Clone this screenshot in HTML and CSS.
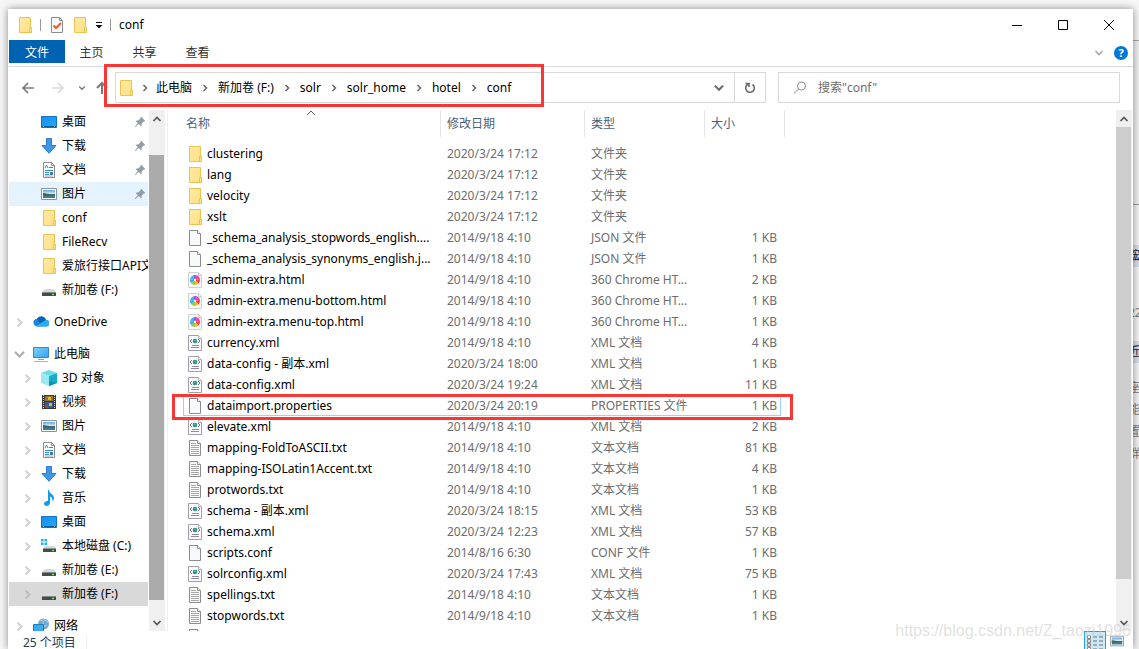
FILE: index.html
```html
<!DOCTYPE html>
<html lang="zh-CN">
<head>
<meta charset="utf-8">
<title>conf</title>
<link rel="stylesheet" href="styles.css">
</head>
<body>
<svg class="defs" aria-hidden="true">
  <defs>
    <linearGradient id="gf" x1="0" y1="0" x2="1" y2="1"><stop offset="0" stop-color="#ffe9a2"/><stop offset="1" stop-color="#ffe084"/></linearGradient>
    <linearGradient id="gd" x1="0" y1="0" x2="1" y2="1"><stop offset="0" stop-color="#1490ee"/><stop offset="1" stop-color="#25a9ff"/></linearGradient>
    <linearGradient id="gm" x1="0" y1="0" x2="1" y2="1"><stop offset="0" stop-color="#7fd0fb"/><stop offset="1" stop-color="#2fa5ee"/></linearGradient>
    <linearGradient id="gp" x1="0" y1="0" x2="0" y2="1"><stop offset="0" stop-color="#5f9fe8"/><stop offset=".45" stop-color="#d8ecf6"/><stop offset=".6" stop-color="#4d7a74"/><stop offset="1" stop-color="#3d78b0"/></linearGradient>
  </defs>
  <symbol id="folder" viewBox="0 0 16 16"><path d="M2.500.5h11v10h1v5h-12z" fill="url(#gf)" stroke="#e9c452"/><path d="M12.500 15.500v-5h2v5z" fill="#ffe391" stroke="#e9c452"/></symbol>
  <symbol id="file" viewBox="0 0 16 16"><path d="M2.500.5h8l3 3v12h-11z" fill="#f8f9fa" stroke="#8c8c8c"/><path d="M10.500.5v3h3" fill="#fff" stroke="#8c8c8c"/></symbol>
  <symbol id="text" viewBox="0 0 16 16"><path d="M2.500.5h8l3 3v12h-11z" fill="#fafafa" stroke="#8c8c8c"/><path d="M10.500.5v3h3" fill="#fff" stroke="#8c8c8c"/><path d="M4 3.500h5M4 5.500h8M4 7.500h8M4 9.500h8M4 11.500h8M4 13.500h8" stroke="#a8a8a8"/></symbol>
  <symbol id="xml" viewBox="0 0 16 16"><path d="M1.500.5h10l3 3v12h-13z" fill="#fbfafc" stroke="#a39fa8"/><path d="M11.500.5v3h3" fill="#fff" stroke="#b5b1b9"/><path d="M5 4L3 6l2 2m6-4l2 2-2 2" fill="none" stroke="#77727e"/><circle cx="8" cy="6" r="2.300" fill="#299481"/><path d="M7 5l2 1" stroke="#5fb7e0"/><path d="M5 10.500h7M4 12.500h8" stroke="#928aa6"/></symbol>
  <symbol id="html" viewBox="0 0 16 16"><path d="M1.500.5h10l3 3v12h-13z" fill="#f8f8f8" stroke="#d2d2d2"/><path d="M11.500.5v3h3" fill="none" stroke="#c8c8c8"/><path d="M8 8L3 7.500A5 5 0 0 1 6 3.500z" fill="#35b6ef"/><path d="M8 8L6 3.500a5 5 0 0 1 4-.2z" fill="#9b4df0"/><path d="M8 8l2-4.700a5 5 0 0 1 3 3.700z" fill="#f04497"/><path d="M8 8l5-1a5 5 0 0 1-1.500 4.500z" fill="#ff3e31"/><path d="M8 8l3.500 3.500A5 5 0 0 1 8 13z" fill="#ffb62b"/><path d="M8 8v5a5 5 0 0 1-4-2z" fill="#8fd13d"/><path d="M8 8l-4 3a5 5 0 0 1-1-3.500z" fill="#35a5ec"/><circle cx="8" cy="8" r="1" fill="#fff"/></symbol>
  <symbol id="desktop" viewBox="0 0 16 16"><path d="M.5 2.500h15v11H.5z" fill="url(#gd)" stroke="#0b74c4"/><path d="M1 12.500h14" stroke="#075da2"/><path d="M2 12.500h1m10 0h1" stroke="#fff"/></symbol>
  <symbol id="download" viewBox="0 0 16 16"><path d="M5.500.5h5v7h4.500L8 15.300 1 7.500h4.500z" fill="#3c97e6" stroke="#2b7cc9"/></symbol>
  <symbol id="document" viewBox="0 0 16 16"><path d="M2.500.5h8l3 3v12h-11z" fill="#fff" stroke="#8c8c8c"/><path d="M10.500.5v3h3" fill="none" stroke="#8c8c8c"/><path d="M4 6l1.500-3L7 6M4 8.500h8M4 10.500h4M4 12.500h4M8 5.500h4" fill="none" stroke="#2f8cc9"/><path d="M9 10h3v3H9z" fill="#4d799f"/><path d="M4 14h8" stroke="#a6a6a6"/></symbol>
  <symbol id="picture" viewBox="0 0 16 16"><path d="M.5 2.500h15v11H.5z" fill="#fff" stroke="#8e9294"/><path d="M2 4h12v8H2z" fill="url(#gp)"/><path d="M2 7c4 0 6 2 12 1v1.500H2z" fill="#32694f"/></symbol>
  <symbol id="drive" viewBox="0 0 16 16"><path d="M4 7h8.500L15 10.500H1z" fill="#d7d9da"/><path d="M1 10h14v4H1z" fill="#484b4d"/><path d="M1 10h14v1H1z" fill="#85898b"/><path d="M11 12.500h2" stroke="#54ec54" stroke-width="1.500"/></symbol>
  <symbol id="system" viewBox="0 0 16 16"><path d="M0 1h2.600v2.600H0zm3.500 0h2.600v2.600H3.500zM0 4.400h2.600V7H0zm3.500 0h2.600V7H3.500z" fill="#14b8f4"/><path d="M4 8h9l2 3H2z" fill="#d7d9da"/><path d="M2 10.500h13V14H2z" fill="#484b4d"/><path d="M11 12.500h2" stroke="#54ec54" stroke-width="1.500"/></symbol>
  <symbol id="cloud" viewBox="0 0 16 16"><path d="M4 12.500a4 4 0 0 1-3-6 4 4 0 0 1 3-1.700 5 5 0 0 1 9 1.400 3.200 3.200 0 0 1 .5 6.300z" fill="#1687dc"/><path d="M4 4.800a5 5 0 0 1 9 1.400L7 9z" fill="#0b62b9"/><path d="M3 12l8-4.500a3.200 3.200 0 1 1 2.500 5H4z" fill="#2dacee"/></symbol>
  <symbol id="computer" viewBox="0 0 16 16"><path d="M.5 1.500h15v10H.5z" fill="url(#gm)" stroke="#3d88b9"/><path d="M5 13.500h6" stroke="#8ba5b5"/><path d="M1 15.500h14" stroke="#a7b5c2"/></symbol>
  <symbol id="cube" viewBox="0 0 16 16"><path d="M0 3l8-3 8 3-8 3z" fill="#6bdde7"/><path d="M0 3l8 3v10l-8-3z" fill="#9be9f1"/><path d="M8 6l8-3v10l-8 3z" fill="#13aec6"/><path d="M8 11l8 2-8 3z" fill="#0e93ad"/></symbol>
  <symbol id="video" viewBox="0 0 16 16"><path d="M1 1h14v14H1z" fill="#383838"/><path d="M2.500 1v14m11-14v14" stroke="#d8d8d8" stroke-dasharray="1 1"/><path d="M4 2h8v5H4z" fill="#9a7633"/><path d="M4 8h8v6H4z" fill="#315d99"/><path d="M7 3h3v3H7zM8 9h3v3H8z" fill="#e9b622"/><path d="M4 11h3v3H4z" fill="#b04430"/></symbol>
  <symbol id="music" viewBox="0 0 16 16"><path d="M8 0c.5 4 5 4 5 8 0 1.500-.5 2.500-1.500 3.500C12 8.500 10 7 9 6.500V13c0 3.500-6 4-6 .8C3 11.500 6 11 7 11V0z" fill="#149ce8"/></symbol>
  <symbol id="network" viewBox="0 0 16 16"><circle cx="10.500" cy="6" r="5.500" fill="#75a9c8"/><path d="M7 2c3 0 4 2 3 4s3 3 4 1M10 1l5 3" fill="none" stroke="#b5d4e4" stroke-width="1"/><path d="M.5 6.500h10v7H.5z" fill="#3aaaf2" stroke="#227fba"/><path d="M3 15h5" stroke="#829cac"/></symbol>
  <symbol id="pin" viewBox="0 0 12 12"><path d="M7 1l4 4-1.500.5-2 2L7 10 4.800 7.800 1 11l3-4L2 5l2.500-.5 2-2z" fill="#929ca5" stroke="#929ca5" stroke-width=".5"/></symbol>
  <symbol id="right" viewBox="0 0 10 10"><path d="M3.500 2l3 3-3 3" fill="none" stroke="currentColor" stroke-width="1.500"/></symbol>
  <symbol id="down" viewBox="0 0 10 10"><path d="M1.500 3l3.500 3.500L8.500 3" fill="none" stroke="currentColor" stroke-width="1.700"/></symbol>
  <symbol id="up" viewBox="0 0 10 10"><path d="M1.500 7L5 3.500 8.500 7" fill="none" stroke="currentColor" stroke-width="1.700"/></symbol>
  <symbol id="caret" viewBox="0 0 10 10"><path d="M1 7l4-4 4 4" fill="none" stroke="currentColor"/></symbol>
</svg>

<div class="backdrop" aria-hidden="true">
  <div class="back-top"></div>
  <div class="back-panel">
    <span class="band">竤</span><span class="faint">22</span><span class="band near">近</span><span class="faint">座</span><span class="faint">能</span><span class="faint">置</span><span class="faint">群</span>
  </div>
</div>

<main class="window">
  <header class="titlebar">
    <svg class="icon"><use href="#folder"/></svg>
    <i class="sep"></i>
    <button class="quick" aria-label="属性"><svg class="icon" viewBox="0 0 16 16"><path d="M2.500.5h8l3 3v12h-11z" fill="#fafafa" stroke="#8c8c8c"/><path d="M10.500.5v3h3" fill="none" stroke="#8c8c8c"/><path d="M4.500 8.500L7 11l5-5" fill="none" stroke="#e4602a" stroke-width="2"/></svg></button>
    <button class="quick" aria-label="新建文件夹"><svg class="icon"><use href="#folder"/></svg></button>
    <button class="quick more" aria-label="自定义"><svg viewBox="0 0 8 8"><path d="M1 1.500h6" stroke="#111"/><path d="M.5 4h7L4 7.500z" fill="#111"/></svg></button>
    <i class="sep"></i>
    <h1>conf</h1>
    <div class="controls">
      <button aria-label="最小化"><svg viewBox="0 0 12 12"><path d="M1 6.500h10" stroke="#000"/></svg></button>
      <button aria-label="最大化"><svg viewBox="0 0 12 12"><path d="M1.500 1.500h9v9h-9z" fill="none" stroke="#000"/></svg></button>
      <button aria-label="关闭"><svg viewBox="0 0 12 12"><path d="M1 1l10 10M11 1L1 11" stroke="#000"/></svg></button>
    </div>
  </header>

  <nav class="ribbon">
    <button class="tab file">文件</button><button class="tab">主页</button><button class="tab">共享</button><button class="tab">查看</button>
    <div class="ribbon-end">
      <button class="expand" aria-label="展开功能区"><svg class="small"><use href="#down"/></svg></button>
      <button class="help" aria-label="帮助">?</button>
    </div>
  </nav>

  <div class="navigation">
    <div class="history">
      <button aria-label="后退"><svg viewBox="0 0 14 14"><path d="M13 7H2m5-5L2 7l5 5" fill="none" stroke="#7a7a7a" stroke-width="1.700"/></svg></button>
      <button class="forward" aria-label="前进"><svg viewBox="0 0 14 14"><path d="M1 7h11M7 2l5 5-5 5" fill="none" stroke="#dadada" stroke-width="1.700"/></svg></button>
      <button class="recent" aria-label="最近"><svg class="small"><use href="#down"/></svg></button>
      <button class="parent" aria-label="上移"><svg viewBox="0 0 14 14"><path d="M7 13V2M2 7l5-5 5 5" fill="none" stroke="#7a7a7a" stroke-width="2"/></svg></button>
    </div>
    <div class="address">
      <svg class="icon"><use href="#folder"/></svg>
      <svg class="crumb first"><use href="#right"/></svg><a href="#">此电脑</a>
      <svg class="crumb"><use href="#right"/></svg><a href="#">新加卷 (F:)</a>
      <svg class="crumb"><use href="#right"/></svg><a href="#">solr</a>
      <svg class="crumb"><use href="#right"/></svg><a href="#">solr_home</a>
      <svg class="crumb"><use href="#right"/></svg><a href="#">hotel</a>
      <svg class="crumb"><use href="#right"/></svg><a href="#">conf</a>
      <button class="drop" aria-label="以前的位置"><svg><use href="#down"/></svg></button>
      <button class="refresh" aria-label="刷新"><svg viewBox="0 0 12 12"><path d="M8.500 2.500A4.300 4.300 0 1 1 3.800 2.300M1.500 1.500H5V5" fill="none" stroke="#6b6b6b" stroke-width="1.600"/></svg></button>
    </div>
    <label class="search">
      <svg viewBox="0 0 14 14"><circle cx="8.500" cy="5" r="4" fill="none" stroke="#8d8489"/><path d="M5.500 8L1 12.500" stroke="#8d8489"/></svg>
      <input type="search" aria-label="搜索" placeholder='搜索"conf"'>
    </label>
    <span class="mark path-mark"></span>
  </div>

  <div class="body">
    <aside class="sidebar">
      <ul class="tree">
        <li><i class="arrow"></i><svg class="icon"><use href="#desktop"/></svg><a href="#">桌面</a><svg class="pin"><use href="#pin"/></svg></li>
        <li><i class="arrow"></i><svg class="icon"><use href="#download"/></svg><a href="#">下载</a><svg class="pin"><use href="#pin"/></svg></li>
        <li><i class="arrow"></i><svg class="icon"><use href="#document"/></svg><a href="#">文档</a><svg class="pin"><use href="#pin"/></svg></li>
        <li class="hover"><i class="arrow"></i><svg class="icon"><use href="#picture"/></svg><a href="#">图片</a><svg class="pin"><use href="#pin"/></svg></li>
        <li><i class="arrow"></i><svg class="icon"><use href="#folder"/></svg><a href="#">conf</a></li>
        <li><i class="arrow"></i><svg class="icon"><use href="#folder"/></svg><a href="#">FileRecv</a></li>
        <li><i class="arrow"></i><svg class="icon"><use href="#folder"/></svg><a href="#">爱旅行接口API文</a></li>
        <li><i class="arrow"></i><svg class="icon"><use href="#drive"/></svg><a href="#">新加卷 (F:)</a></li>
        <li class="root"><svg class="arrow"><use href="#right"/></svg><svg class="icon"><use href="#cloud"/></svg><a href="#">OneDrive</a></li>
        <li class="root open"><svg class="arrow"><use href="#down"/></svg><svg class="icon"><use href="#computer"/></svg><a href="#">此电脑</a></li>
        <li><svg class="arrow"><use href="#right"/></svg><svg class="icon"><use href="#cube"/></svg><a href="#">3D 对象</a></li>
        <li><svg class="arrow"><use href="#right"/></svg><svg class="icon"><use href="#video"/></svg><a href="#">视频</a></li>
        <li><svg class="arrow"><use href="#right"/></svg><svg class="icon"><use href="#picture"/></svg><a href="#">图片</a></li>
        <li><svg class="arrow"><use href="#right"/></svg><svg class="icon"><use href="#document"/></svg><a href="#">文档</a></li>
        <li><svg class="arrow"><use href="#right"/></svg><svg class="icon"><use href="#download"/></svg><a href="#">下载</a></li>
        <li><svg class="arrow"><use href="#right"/></svg><svg class="icon"><use href="#music"/></svg><a href="#">音乐</a></li>
        <li><svg class="arrow"><use href="#right"/></svg><svg class="icon"><use href="#desktop"/></svg><a href="#">桌面</a></li>
        <li><svg class="arrow"><use href="#right"/></svg><svg class="icon"><use href="#system"/></svg><a href="#">本地磁盘 (C:)</a></li>
        <li><svg class="arrow"><use href="#right"/></svg><svg class="icon"><use href="#drive"/></svg><a href="#">新加卷 (E:)</a></li>
        <li class="current"><svg class="arrow"><use href="#right"/></svg><svg class="icon"><use href="#drive"/></svg><a href="#">新加卷 (F:)</a></li>
        <li class="root"><svg class="arrow"><use href="#right"/></svg><svg class="icon"><use href="#network"/></svg><a href="#">网络</a></li>
      </ul>
      <div class="scrollbar side-scroll">
        <button aria-label="向上滚动"><svg class="small"><use href="#up"/></svg></button>
        <div class="track"><i class="thumb"></i></div>
        <button aria-label="向下滚动"><svg class="small"><use href="#down"/></svg></button>
      </div>
    </aside>

    <section class="files">
      <div class="list">
      <table>
        <colgroup><col class="c-name"><col class="c-date"><col class="c-type"><col class="c-size"></colgroup>
        <thead><tr><th>名称<svg class="sort small"><use href="#caret"/></svg></th><th>修改日期</th><th>类型</th><th>大小</th></tr></thead>
        <tbody>
          <tr class="gap"><td colspan="4"></td></tr>
          <tr><td><svg class="icon"><use href="#folder"/></svg>clustering</td><td>2020/3/24 17:12</td><td>文件夹</td><td></td></tr>
          <tr><td><svg class="icon"><use href="#folder"/></svg>lang</td><td>2020/3/24 17:12</td><td>文件夹</td><td></td></tr>
          <tr><td><svg class="icon"><use href="#folder"/></svg>velocity</td><td>2020/3/24 17:12</td><td>文件夹</td><td></td></tr>
          <tr><td><svg class="icon"><use href="#folder"/></svg>xslt</td><td>2020/3/24 17:12</td><td>文件夹</td><td></td></tr>
          <tr><td><svg class="icon"><use href="#file"/></svg>_schema_analysis_stopwords_english....</td><td>2014/9/18 4:10</td><td>JSON 文件</td><td>1 KB</td></tr>
          <tr><td><svg class="icon"><use href="#file"/></svg>_schema_analysis_synonyms_english.j...</td><td>2014/9/18 4:10</td><td>JSON 文件</td><td>1 KB</td></tr>
          <tr><td><svg class="icon"><use href="#html"/></svg>admin-extra.html</td><td>2014/9/18 4:10</td><td>360 Chrome HT...</td><td>2 KB</td></tr>
          <tr><td><svg class="icon"><use href="#html"/></svg>admin-extra.menu-bottom.html</td><td>2014/9/18 4:10</td><td>360 Chrome HT...</td><td>1 KB</td></tr>
          <tr><td><svg class="icon"><use href="#html"/></svg>admin-extra.menu-top.html</td><td>2014/9/18 4:10</td><td>360 Chrome HT...</td><td>1 KB</td></tr>
          <tr><td><svg class="icon"><use href="#xml"/></svg>currency.xml</td><td>2014/9/18 4:10</td><td>XML 文档</td><td>4 KB</td></tr>
          <tr><td><svg class="icon"><use href="#xml"/></svg>data-config - 副本.xml</td><td>2020/3/24 18:00</td><td>XML 文档</td><td>1 KB</td></tr>
          <tr><td><svg class="icon"><use href="#xml"/></svg>data-config.xml</td><td>2020/3/24 19:24</td><td>XML 文档</td><td>11 KB</td></tr>
          <tr class="focused"><td><svg class="icon"><use href="#file"/></svg>dataimport.properties<span class="mark row-mark"></span></td><td>2020/3/24 20:19</td><td>PROPERTIES 文件</td><td>1 KB</td></tr>
          <tr><td><svg class="icon"><use href="#xml"/></svg>elevate.xml</td><td>2014/9/18 4:10</td><td>XML 文档</td><td>2 KB</td></tr>
          <tr><td><svg class="icon"><use href="#text"/></svg>mapping-FoldToASCII.txt</td><td>2014/9/18 4:10</td><td>文本文档</td><td>81 KB</td></tr>
          <tr><td><svg class="icon"><use href="#text"/></svg>mapping-ISOLatin1Accent.txt</td><td>2014/9/18 4:10</td><td>文本文档</td><td>4 KB</td></tr>
          <tr><td><svg class="icon"><use href="#text"/></svg>protwords.txt</td><td>2014/9/18 4:10</td><td>文本文档</td><td>1 KB</td></tr>
          <tr><td><svg class="icon"><use href="#xml"/></svg>schema - 副本.xml</td><td>2020/3/24 18:15</td><td>XML 文档</td><td>53 KB</td></tr>
          <tr><td><svg class="icon"><use href="#xml"/></svg>schema.xml</td><td>2020/3/24 12:23</td><td>XML 文档</td><td>57 KB</td></tr>
          <tr><td><svg class="icon"><use href="#file"/></svg>scripts.conf</td><td>2014/8/16 6:30</td><td>CONF 文件</td><td>1 KB</td></tr>
          <tr><td><svg class="icon"><use href="#xml"/></svg>solrconfig.xml</td><td>2020/3/24 17:43</td><td>XML 文档</td><td>75 KB</td></tr>
          <tr><td><svg class="icon"><use href="#text"/></svg>spellings.txt</td><td>2014/9/18 4:10</td><td>文本文档</td><td>1 KB</td></tr>
          <tr><td><svg class="icon"><use href="#text"/></svg>stopwords.txt</td><td>2014/9/18 4:10</td><td>文本文档</td><td>1 KB</td></tr>
          <tr><td><svg class="icon"><use href="#text"/></svg></td><td></td><td></td><td></td></tr>
        </tbody>
      </table>
      </div>
      <div class="scrollbar main-scroll">
        <button aria-label="向上滚动"><svg class="small"><use href="#up"/></svg></button>
        <div class="track"><i class="thumb"></i></div>
        <button aria-label="向下滚动"><svg class="small"><use href="#down"/></svg></button>
      </div>
    </section>
  </div>

  <footer class="status">
    <span class="count">25 个项目</span>
    <div class="views">
      <button class="details" aria-label="详细信息"><svg viewBox="0 0 18 16"><path d="M1.500 1.500h3v3h-3zm0 4h3v3h-3zm0 4h3v3h-3zm0 4h3v3h-3z" fill="#fff" stroke="#8c8c8c"/><path d="M7 3h4m2 0h4M7 7h4m2 0h4M7 11h4m2 0h4M7 15h4m2 0h4" stroke="#707070"/><path d="M3 6.500v1" stroke="#3385ff"/><path d="M3 10.500v1" stroke="#e02020"/></svg></button>
      <button class="large" aria-label="大图标"><svg class="icon"><use href="#picture"/></svg></button>
    </div>
  </footer>
</main>
<div class="watermark">https://blog.csdn.net/Z_taozi1996</div>
</body>
</html>
```

FILE: styles.css
```css
* { box-sizing: border-box; }

body {
  margin: 0;
  height: 100vh;
  padding: 9px 6px 0 8px;
  overflow: hidden;
  position: relative;
  background: #f7f7f7;
  color: #000;
  font: 12px/16px "Noto Sans", "Noto Sans CJK SC", sans-serif;
}

.defs { position: absolute; width: 0; height: 0; }
ul, h1 { margin: 0; padding: 0; font: inherit; }
a { color: inherit; text-decoration: none; }
button {
  display: flex;
  align-items: center;
  justify-content: center;
  margin: 0;
  padding: 0;
  border: 0;
  background: none;
  color: inherit;
  font: inherit;
}
svg { display: block; flex: none; }
.icon { width: 16px; height: 16px; }
.small { width: 10px; height: 10px; }

/* Page behind the window, seen at its right edge */
.backdrop {
  position: absolute;
  top: 0;
  right: 0;
  bottom: 0;
  width: 8px;
  display: flex;
  flex-direction: column;
  overflow: hidden;
  background: #f0f0f0;
}
.back-top { height: 205px; border-bottom: 1px solid #999; background: linear-gradient(#f7f7f7 40px, #aaa 40px, #aaa 41px, #f0f0f0 41px); }
.back-panel {
  flex: 1;
  padding: 40px 0 0 2px;
  background: #f4f4f4;
  display: flex;
  flex-direction: column;
  gap: 6px;
}
.back-panel span { height: 16px; width: 12px; text-indent: -5px; }
.back-panel .band { height: 22px; line-height: 22px; margin-bottom: 32px; background: #d9dee8; color: #223; }
.back-panel .near { margin: 14px 0 11px; }
.back-panel .faint { color: #777; }

.window {
  position: relative;
  height: 100%;
  display: flex;
  flex-direction: column;
  padding-left: 1px;
  background: #fff;
  box-shadow: 0 0 8px rgba(0, 0, 0, .45);
}

.titlebar { display: flex; align-items: center; height: 31px; padding-left: 8px; }
.titlebar .sep { width: 1px; height: 12px; margin: 0 8px 0 7px; background: #999; }
.titlebar .quick { width: 16px; height: 24px; margin-right: 7px; }
.titlebar .more { width: 8px; margin-right: 0; }
.more svg { width: 8px; height: 8px; }
.controls { display: flex; margin-left: auto; padding-right: 1px; }
.controls button { width: 46px; height: 30px; }
.controls svg { width: 12px; height: 12px; }

.ribbon { display: flex; align-items: flex-start; height: 27px; border-bottom: 1px solid #dadbdc; }
.tab { width: 53px; height: 23px; padding-top: 2px; color: #333; }
.file { width: 56px; background: #0063b1; color: #fff; }
.ribbon-end { display: flex; align-items: center; gap: 10px; height: 26px; margin-left: auto; padding-right: 5px; color: #aaa; }
.help { width: 14px; height: 14px; border-radius: 50%; background: #0078d7; color: #fff; font-weight: 700; font-size: 11px; }

.navigation { position: relative; display: flex; height: 42px; padding: 5px 13px 6px 10px; }
.history { display: flex; flex: none; width: 96px; color: #777; }
.history button { width: 18px; }
.history svg { width: 14px; height: 14px; }
.history .forward { margin-left: 12px; }
.history .recent { width: 10px; margin-left: 10px; }
.history .recent svg { width: 8px; height: 8px; }
.history .parent { margin-left: 6px; }
.address { display: flex; align-items: center; flex: 651 1 651px; padding-left: 2px; border: 1px solid #d9d9d9; }
.address .crumb { width: 10px; height: 10px; margin: 0 8px; color: #666; }
.address .first { margin: 0 6px; }
.address .drop { width: 30px; height: 100%; margin-left: auto; color: #6b6b6b; }
.drop svg { width: 12px; height: 12px; }
.address .refresh { width: 31px; height: 100%; border-left: 1px solid #d9d9d9; }
.refresh svg { width: 12px; height: 12px; }
.search { display: flex; align-items: center; flex: 342 1 342px; margin-left: 12px; padding-left: 14px; border: 1px solid #d9d9d9; }
.search svg { width: 14px; height: 14px; }
.search input { flex: 1; min-width: 0; margin-left: 11px; padding: 0; border: 0; outline: 0; background: none; font: inherit; }
.search input::placeholder { color: #6d6d6d; opacity: 1; }

.mark { position: absolute; border: 3px solid #fb3736; pointer-events: none; }
.path-mark { left: 95px; top: -3px; width: 440px; height: 43px; z-index: 2; }

.body { display: flex; flex: 1; min-height: 0; padding-top: 1px; }
.sidebar { display: flex; width: 159px; border-right: 1px solid #f0f0f0; }
.tree { flex: none; width: 139px; margin-right: 1px; overflow: hidden; list-style: none; }
.tree li { display: flex; align-items: center; height: 24px; padding-left: 12px; white-space: nowrap; }
.tree .root { margin: 8px 0; padding-left: 4px; }
.tree .open { margin-bottom: 0; }
.tree .arrow { flex: none; width: 13px; height: 13px; margin-right: 7px; color: #cfcfcf; }
.tree .open .arrow { color: #b0b0b0; }
.tree .icon { margin-right: 5px; }
.tree .pin { width: 12px; height: 12px; margin: 0 2px 0 auto; }
.tree .hover { background: #e5f3ff; }
.tree .current { background: #d9d9d9; }
.tree .current .arrow { color: #bcbcbc; }

.scrollbar { display: flex; flex-direction: column; flex: none; width: 16px; background: #f0f0f0; color: #555; }
.scrollbar button { height: 17px; width: 15px; }
.track { flex: 1; display: flex; flex-direction: column; }
.thumb { width: 15px; background: #cdcdcd; }
.track::before, .track::after { content: ""; }
.side-scroll .thumb { flex: 445; background: #ababab; }
.side-scroll .track::before { flex: 28; }
.side-scroll .track::after { flex: 14; }
.main-scroll .thumb { flex: 452; }
.main-scroll .track::after { flex: 35; }

.files { display: flex; flex: 1; min-width: 0; padding-right: 1px; }
.list { flex: 1; min-width: 0; overflow: hidden; }
table { width: 617px; table-layout: fixed; border-collapse: separate; border-spacing: 0; }
.c-name { width: 273px; }
.c-date { width: 144px; }
.c-type { width: 120px; }
.c-size { width: 80px; }
th { position: relative; height: 27px; padding: 0 0 0 6px; border-right: 1px solid #e5e5e5; color: #4c607a; font-weight: 400; text-align: left; }
th:first-child { padding-left: 18px; }
.sort { position: absolute; left: 138px; top: -2px; color: #666; }
td { height: 21px; padding: 0 0 0 6px; color: #6d6d6d; white-space: nowrap; }
td:first-child { padding-left: 19px; color: #000; }
td:last-child { padding: 0 8px 0 0; text-align: right; }
td .icon { display: inline-block; margin-right: 4px; vertical-align: bottom; }
.gap td { height: 6px; padding: 0; }
.focused { position: relative; }
.focused::after { content: ""; position: absolute; left: 15px; right: 4px; top: 0; bottom: 0; border: 1px solid #99d1ff; }
.row-mark { left: 4px; right: -8px; top: -1px; bottom: -4px; z-index: 2; }

.status { display: flex; align-items: flex-start; height: 18px; overflow: hidden; color: #1e395b; }
.count { margin: 4px 0 0; padding: 0 10px 0 14px; border-right: 1px solid #eee; }
.views { display: flex; gap: 3px; margin-left: auto; padding-right: 8px; }
.details { width: 22px; height: 22px; border: 1px solid #26a0da; background: #cbe8f6; }
.details svg { width: 18px; height: 16px; }
.large { width: 16px; height: 20px; }
.large svg { width: 14px; height: 14px; }

.watermark {
  position: absolute;
  right: 8px;
  bottom: 9px;
  color: rgba(205, 205, 205, .6);
  font: 16px/18px "Liberation Sans", sans-serif;
}
```
